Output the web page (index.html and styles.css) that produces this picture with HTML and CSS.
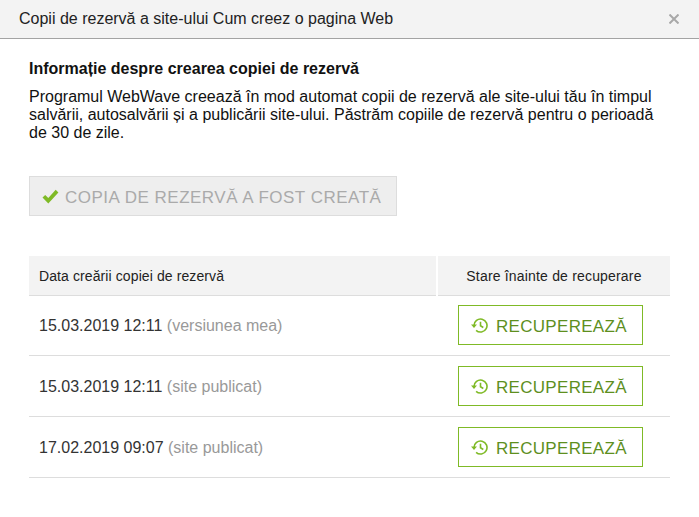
FILE: index.html
```html
<!DOCTYPE html>
<html lang="ro">
<head>
<meta charset="utf-8">
<title>Copii de rezervă</title>
<link rel="stylesheet" href="styles.css">
</head>
<body>
<header class="head">
  <span class="head-title">Copii de rezervă a site-ului Cum creez o pagina Web</span>
  <svg class="close" viewBox="0 0 10 10" width="10" height="10"><path d="M0.5 0.5l9 9M9.5 0.5l-9 9"/></svg>
</header>
<main class="content">
  <h2 class="info-title">Informație despre crearea copiei de rezervă</h2>
  <p class="info-text">Programul WebWave creează în mod automat copii de rezervă ale site-ului tău în timpul salvării, autosalvării și a publicării site-ului. Păstrăm copiile de rezervă pentru o perioadă de 30 de zile.</p>
  <div class="created">
    <svg class="check" viewBox="0 0 17 15" width="17" height="15"><path d="M0.5 8.5l2.7-2.6 3.1 3.2L13.7 0.8 16.4 3.4 6.3 14.6z"/></svg>
    <span class="created-label">COPIA DE REZERVĂ A FOST CREATĂ</span>
  </div>
  <section class="table">
    <div class="thead">
      <div class="th th-date">Data creării copiei de rezervă</div>
      <div class="th th-state">Stare înainte de recuperare</div>
    </div>
    <div class="row">
      <div class="cell-date">15.03.2019 12:11 <span class="muted">(versiunea mea)</span></div>
      <div class="cell-action"><button class="restore"><svg class="hist" viewBox="0 0 17 15" width="17" height="15"><path class="ln" d="M3 7.5a6.5 6.5 0 1 1 2.1 4.8"/><path class="ln" d="M9.5 3.8v4l2.8 1.7"/><path class="fl" d="M0 6.6h6L3 10z"/></svg><span class="restore-label">RECUPEREAZĂ</span></button></div>
    </div>
    <div class="row">
      <div class="cell-date">15.03.2019 12:11 <span class="muted">(site publicat)</span></div>
      <div class="cell-action"><button class="restore"><svg class="hist" viewBox="0 0 17 15" width="17" height="15"><path class="ln" d="M3 7.5a6.5 6.5 0 1 1 2.1 4.8"/><path class="ln" d="M9.5 3.8v4l2.8 1.7"/><path class="fl" d="M0 6.6h6L3 10z"/></svg><span class="restore-label">RECUPEREAZĂ</span></button></div>
    </div>
    <div class="row">
      <div class="cell-date">17.02.2019 09:07 <span class="muted">(site publicat)</span></div>
      <div class="cell-action"><button class="restore"><svg class="hist" viewBox="0 0 17 15" width="17" height="15"><path class="ln" d="M3 7.5a6.5 6.5 0 1 1 2.1 4.8"/><path class="ln" d="M9.5 3.8v4l2.8 1.7"/><path class="fl" d="M0 6.6h6L3 10z"/></svg><span class="restore-label">RECUPEREAZĂ</span></button></div>
    </div>
  </section>
</main>
</body>
</html>
```
FILE: styles.css
```css
* { box-sizing: border-box; }
html, body { margin: 0; padding: 0; }
body {
  width: 699px;
  height: 517px;
  overflow: hidden;
  background: #fff;
  color: #111;
  font-family: "Liberation Sans", Arial, sans-serif;
  font-size: 16px;
}
.head {
  height: 39px;
  background: #f3f3f3;
  border-bottom: 1px solid #a3a3a3;
  display: flex;
  align-items: center;
  justify-content: space-between;
  padding: 0 20px 0 19px;
}
.head-title { font-size: 16px; color: #222; }
.close path { stroke: #a8a8a8; stroke-width: 2; fill: none; }
.content { padding: 21px 29px 0; }
.info-title {
  margin: 0;
  font-size: 16px;
  line-height: 18px;
  font-weight: bold;
  color: #111;
}
.info-text {
  margin: 10px 0 0;
  font-size: 16px;
  line-height: 18px;
  color: #111;
}
.created {
  margin-top: 34px;
  width: 368px;
  height: 40px;
  background: #eee;
  border: 1px solid #ddd;
  display: flex;
  align-items: center;
  padding-left: 12px;
  gap: 6px;
  color: #aaa;
  font-size: 17px;
  letter-spacing: 0.5px;
  white-space: nowrap;
}
.created-label { padding-top: 4px; }
.check { flex: none; }
.check path { fill: #7fba26; }
.table { margin-top: 40px; width: 641px; }
.thead { display: flex; gap: 2px; height: 40px; }
.th {
  background: #f3f3f3;
  border-bottom: 1px solid #ddd;
  font-size: 14px;
  color: #222;
  display: flex;
  align-items: center;
}
.th-date { width: 407px; padding-left: 10px; letter-spacing: 0.1px; }
.th-state { flex: 1; justify-content: center; letter-spacing: 0.18px; }
.row {
  height: 61px;
  display: flex;
  align-items: center;
  border-bottom: 1px solid #ddd;
  font-size: 16px;
  color: #333;
}
.thead + .row { height: 60px; }
.thead + .row .cell-action { padding-bottom: 1px; }
.cell-date { width: 409px; padding: 1px 0 0 10px; }
.muted { color: #999; }
.cell-action { flex: 1; display: flex; justify-content: flex-start; padding-left: 20px; }
.restore {
  width: 185px;
  height: 40px;
  background: #fff;
  border: 1px solid #7fba26;
  display: flex;
  align-items: center;
  gap: 8px;
  padding: 0 0 0 12px;
  color: #5e8f1e;
  font-family: inherit;
  font-size: 17px;
  letter-spacing: 0.3px;
  white-space: nowrap;
}
.restore-label { padding-top: 3px; }
.hist { flex: none; }
.hist .ln { fill: none; stroke: #7fba26; stroke-width: 1.6; }
.hist .fl { fill: #7fba26; }
```
